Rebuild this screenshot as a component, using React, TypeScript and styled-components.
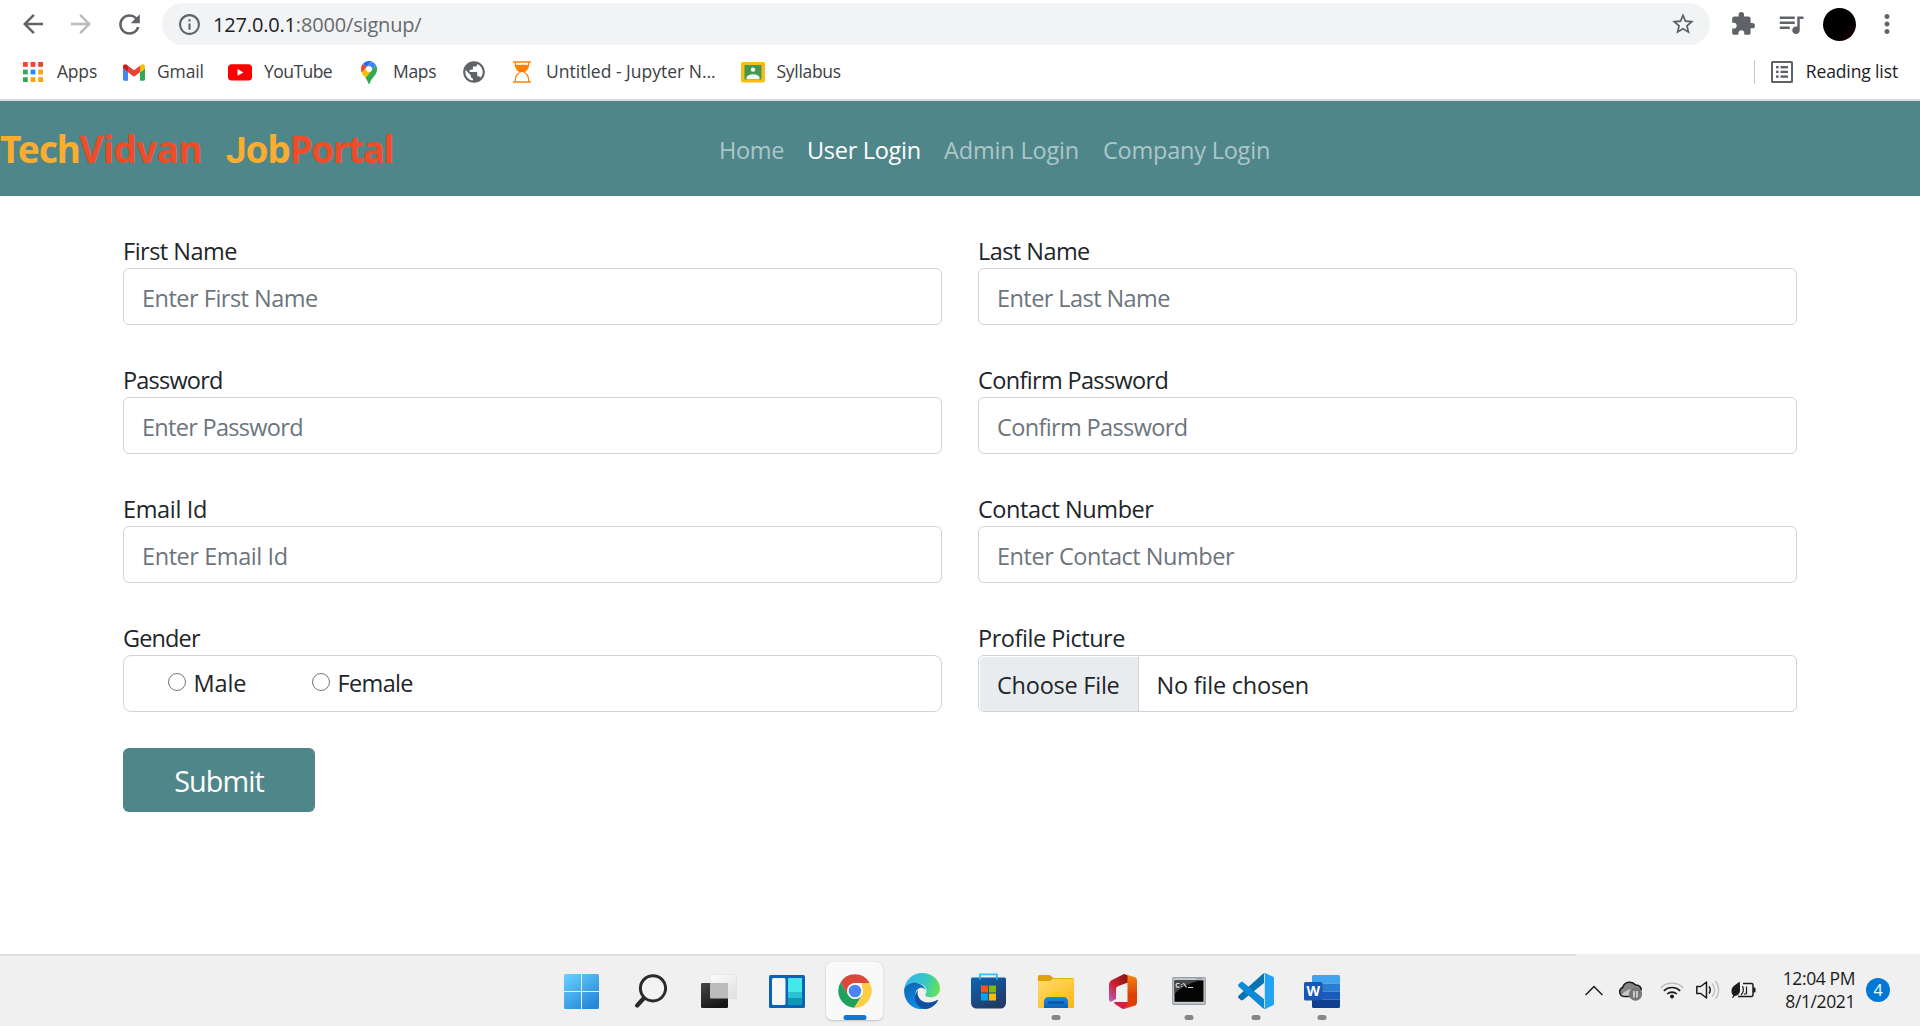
import React from "react";
import styled, { createGlobalStyle } from "styled-components";
import {
  MdArrowBack,
  MdArrowForward,
  MdExtension,
  MdInfoOutline,
  MdMoreVert,
  MdPublic,
  MdQueueMusic,
  MdRefresh,
  MdStarBorder,
} from "react-icons/md";

const TEAL = "#4f868a";
const GREY = "#5f6368";

const GlobalStyle = createGlobalStyle`
  * { box-sizing: border-box; }
  body {
    margin: 0;
    background: #fff;
    font-family: "Segoe UI", "Open Sans", "Noto Sans", sans-serif;
    color: #212529;
  }
  svg { display: block; flex: none; }
`;

const Screen = styled.div`
  display: flex;
  flex-direction: column;
  width: 1920px;
  height: 1026px;
  overflow: hidden;
`;

/* ---------- browser chrome ---------- */

const Toolbar = styled.div`
  display: flex;
  align-items: center;
  height: 48px;
  padding-left: 18px;
  color: ${GREY};
`;

const ToolButton = styled.button<{ $faded?: boolean; $width?: number }>`
  display: flex;
  flex: none;
  align-items: center;
  justify-content: center;
  width: ${(p) => p.$width ?? 48}px;
  height: 42px;
  padding: 0;
  border: 0;
  background: none;
  color: ${(p) => (p.$faded ? "#babcbe" : GREY)};
`;

const Omnibox = styled.div`
  display: flex;
  flex: none;
  align-items: center;
  width: 1548px;
  height: 42px;
  margin-left: 18px;
  padding: 0 14px 0 15px;
  border-radius: 21px;
  background: #f1f3f4;
`;

const Url = styled.span`
  flex: 1;
  margin-left: 11px;
  font-size: 20px;
  letter-spacing: -0.17px;
  color: #68696c;
  b { font-weight: 400; color: #202124; }
`;

const Avatar = styled.div`
  flex: none;
  width: 33px;
  height: 33px;
  margin-left: 17px;
  border-radius: 50%;
  background: linear-gradient(135deg, #000 60%, #1c0003);
`;

const Bookmarks = styled.div`
  display: flex;
  align-items: center;
  height: 51px;
  padding: 0 22px 3px 23px;
  font-size: 17.5px;
  color: #3c4043;
`;

const Bookmark = styled.div<{ $width: number; $icon: number; $track?: number }>`
  display: flex;
  align-items: center;
  flex: none;
  width: ${(p) => p.$width}px;
  letter-spacing: ${(p) => p.$track ?? 0}px;
  line-height: 22px;
  white-space: nowrap;
  svg { margin-right: ${(p) => p.$icon}px; }
`;

const BookmarkName = styled.span`
  padding-bottom: 2px;
`;

const ReadingList = styled.div`
  display: flex;
  align-items: center;
  gap: 12.5px;
  height: 24px;
  margin-left: auto;
  padding-left: 16px;
  border-left: 1px solid #c6c8cb;
  line-height: 22px;
  letter-spacing: -0.12px;
  color: #202124;
`;

/* ---------- page ---------- */

const Navbar = styled.nav`
  display: flex;
  align-items: center;
  height: 97px;
  border-top: 2px solid #dadce0;
  background: ${TEAL};
`;

const Brand = styled.div`
  display: flex;
  gap: 24px;
  width: 719px;
  padding-top: 3px;
  font-family: "Noto Sans", sans-serif;
  font-size: 37px;
  font-weight: 700;
  line-height: 50px;
`;

const BrandPart = styled.span<{ $warm?: boolean; $flatJ?: boolean; $track: number }>`
  display: inline-block;
  color: ${(p) => (p.$warm ? "#f04c27" : "#fbad30")};
  letter-spacing: ${(p) => p.$track}px;
  &::first-letter {
    ${(p) => p.$flatJ && "font-family: Roboto, sans-serif;"}
  }
`;

const NavLinks = styled.div`
  display: grid;
  grid-template-columns: 88px 137px 159px auto;
  padding-top: 2px;
`;

const NavLink = styled.a<{ $active?: boolean; $track: number }>`
  font-size: 23.5px;
  line-height: 36px;
  white-space: nowrap;
  color: ${(p) => (p.$active ? "#fff" : "rgba(255,255,255,.55)")};
  letter-spacing: ${(p) => p.$track}px;
`;

const Main = styled.main`
  flex: 1;
  padding: 36px 123px 0;
`;

const Form = styled.form`
  display: grid;
  grid-template-columns: 819px 819px;
  gap: 36px;
`;

const Field = styled.div`
  display: flex;
  flex-direction: column;
`;

const Label = styled.label<{ $track: number }>`
  height: 36px;
  padding-top: 1px;
  font-size: 23.5px;
  line-height: 36px;
  letter-spacing: ${(p) => p.$track}px;
`;

const Input = styled.input<{ $track: number }>`
  width: 100%;
  height: 57px;
  padding: 2px 19px 0 18px;
  border: 1px solid #ced4da;
  border-radius: 6px;
  font: inherit;
  font-size: 23.5px;
  letter-spacing: ${(p) => p.$track}px;
  &::placeholder { color: #6c757d; opacity: 1; }
`;

const RadioBox = styled.div`
  display: flex;
  height: 57px;
  padding: 0 0 2px 44px;
  border: 1px solid #d3d3d3;
  border-radius: 8px;
`;

const Option = styled.label<{ $track: number }>`
  display: flex;
  align-items: center;
  width: 144px;
  font-size: 23.5px;
  letter-spacing: ${(p) => p.$track}px;
`;

const Radio = styled.input`
  appearance: none;
  flex: none;
  width: 18px;
  height: 18px;
  margin: 0 7.5px 2px 0;
  border: 1.5px solid #767676;
  border-radius: 50%;
`;

const FileBox = styled.div`
  display: flex;
  height: 57px;
  padding: 1px 0 0 1px;
  border: 1px solid #ced4da;
  border-radius: 6px;
  font-size: 23.5px;
  line-height: 56px;
`;

const FileButton = styled.span`
  width: 159px;
  height: 54px;
  padding-left: 17px;
  border-right: 1px solid #ced4da;
  border-radius: 5px 0 0 5px;
  background: #e9ecef;
  letter-spacing: -0.24px;
  white-space: nowrap;
`;

const FileName = styled.span`
  height: 54px;
  padding-left: 17.5px;
  letter-spacing: -0.22px;
`;

const Submit = styled.button`
  width: 192px;
  height: 64px;
  padding: 0;
  border: 0;
  border-radius: 6px;
  background: ${TEAL};
  color: #fff;
  font: inherit;
  font-size: 28.8px;
  letter-spacing: -0.92px;
`;

/* ---------- taskbar ---------- */

const Taskbar = styled.div`
  display: flex;
  height: 72px;
  background: #f0f0f0;
`;

const Apps = styled.div`
  display: grid;
  grid-template-columns: 69px 70px 66px 70px 65px 70px 63px 72px 61px 71px 64px 68px;
  width: 1576px;
  padding-left: 547px;
  border-top: 2px solid #dfdfdf;
`;

const TaskbarApp = styled.div<{ $state?: "active" | "open" }>`
  position: relative;
  display: flex;
  align-items: center;
  justify-content: center;
  justify-self: center;
  width: 57px;
  height: 58px;
  margin-top: 6px;
  border-radius: 6px;
  ${(p) => p.$state === "active" && "background:#f9f9f9; box-shadow: 0 1px 2px #c4c4c4, 0 0 1px #c8c8c8;"}
  &::after {
    content: ${(p) => (p.$state ? '""' : "none")};
    position: absolute;
    left: 50%;
    bottom: 0;
    width: ${(p) => (p.$state === "active" ? 23 : 9)}px;
    height: 5px;
    transform: translateX(-50%);
    border-radius: 3px;
    background: ${(p) => (p.$state === "active" ? "#0a78d4" : "#868686")};
  }
`;

const Tray = styled.div`
  display: flex;
  align-items: center;
  height: 72px;
  padding-left: 9px;
`;

const TrayIcon = styled.span<{ $gap: number }>`
  margin-right: ${(p) => p.$gap}px;
`;

const Clock = styled.div`
  width: 99px;
  font-size: 17.5px;
  line-height: 23px;
  letter-spacing: -0.4px;
  text-align: right;
  color: #1b1b1b;
`;

const Badge = styled.div`
  width: 24px;
  height: 24px;
  margin-left: 11px;
  border-radius: 50%;
  background: #0078d7;
  color: #fff;
  font-size: 16px;
  line-height: 24px;
  text-align: center;
`;

/* ---------- drawings ---------- */

const AppsGridIcon = () => {
  const colors = ["#fb4134", "#fb4134", "#ea4335", "#34a853", "#1a8cff", "#fba50a", "#34a853", "#fba50a", "#fba50a"];
  return (
    <svg width="20" height="20">
      {colors.map((c, i) => (
        <rect key={i} x={(i % 3) * 7.6} y={Math.floor(i / 3) * 7.6} width="4.8" height="4.8" fill={c} />
      ))}
    </svg>
  );
};

const GmailIcon = () => (
  <svg width="22" height="17" viewBox="0 0 88 66">
    <path fill="#4285f4" d="M6 66h14V32L0 17v43c0 3.3 2.7 6 6 6" />
    <path fill="#34a853" d="M68 66h14c3.300 0 6-2.700 6-6V17L68 32" />
    <path fill="#fbbc04" d="M68 6v26l20-15V9c0-7.400-8.500-11.600-14.400-7.200" />
    <path fill="#ea4335" d="M20 32V6l24 18L68 6v26L44 50" />
    <path fill="#c5221f" d="M0 9v8l20 15V6l-5.600-4.200C8.500-2.600 0 1.600 0 9" />
  </svg>
);

const YouTubeIcon = () => (
  <svg width="24" height="17">
    <rect y=".3" width="24" height="16.200" rx="3.500" fill="#f00" />
    <path d="M9.500 5l6 3.400-6 3.400z" fill="#fff" />
  </svg>
);

const MapsIcon = () => (
  <svg width="16" height="23" viewBox="0 0 92.300 132.300">
    <path fill="#1a73e8" d="M60.200 2.200C55.800.8 51 0 46.100 0 32 0 19.300 6.400 10.800 16.500l21.800 18.300z" />
    <path fill="#ea4335" d="M10.800 16.500C4.100 24.500 0 34.900 0 46.100c0 8.700 1.700 15.700 4.600 22l28-33.300z" />
    <path fill="#4285f4" d="M46.200 28.500a17.700 17.700 0 0113.500 29.200s13.100-15.600 27.500-32.700c-5.900-11.300-15.600-20.300-27-22.800L32.600 34.800c3.300-3.800 8.100-6.300 13.600-6.300" />
    <path fill="#fbbc04" d="M46.200 63.800a17.700 17.700 0 01-13.500-29.100l-28 33.300c4.800 10.600 12.800 19.200 21 29.900l34.100-40.500c-3.300 3.900-8.100 6.400-13.600 6.400" />
    <path fill="#34a853" d="M59.100 109.200c15.400-24.100 33.300-35 33.300-63 0-7.700-1.900-14.900-5.200-21.200L25.600 98c2.600 3.400 5.300 7.300 7.900 11.300 9.400 14.500 6.800 23.100 12.800 23.100s3.400-8.700 12.800-23.200" />
  </svg>
);

const HourglassIcon = () => (
  <svg width="18" height="22" viewBox="0 0 18 22" fill="none" stroke="#ff8000" strokeWidth="1.500">
    <path d="M0 1h18M0 21h18" />
    <path d="M2.200 1c0 5.500 1.200 7.500 5 10-3.800 2.500-5 4.500-5 10M15.800 1c0 5.500-1.200 7.500-5 10 3.800 2.500 5 4.500 5 10" strokeWidth="1.200" />
    <path d="M2.500 4c1.500-.6 3 .4 6.500-.2 3-.4 4.500.4 6.500 0-.6 3.700-2 5.700-4.500 7.200H7C4.500 9.500 3 7.500 2.500 4z" fill="#ff8000" stroke="none" />
  </svg>
);

const ClassroomIcon = () => (
  <svg width="24" height="21">
    <rect width="24" height="20.500" rx="1.800" fill="#fbbc14" />
    <rect x="3.500" y="3" width="17" height="14.500" fill="#43974f" />
    <circle cx="12" cy="7.600" r="2.200" fill="#fff" />
    <path d="M5.500 17.200v-1.400c0-2.300 3.500-3.500 6.500-3.500s6.500 1.200 6.500 3.500v1.400z" fill="#f4f7f4" />
  </svg>
);

const ReadingListIcon = () => (
  <svg width="22" height="22" fill={GREY}>
    <path fillRule="evenodd" d="M1.500 0h19A1.500 1.500 0 0122 1.500v19a1.500 1.500 0 01-1.500 1.500h-19A1.500 1.500 0 010 20.500v-19A1.500 1.500 0 011.500 0zM2 2v18h18V2z" />
    {[5, 9.7, 14.4].map((y) => (
      <React.Fragment key={y}>
        <rect x="5" y={y} width="2.600" height="2.400" />
        <rect x="9.500" y={y} width="7.500" height="2.400" />
      </React.Fragment>
    ))}
  </svg>
);

const StartIcon = () => (
  <svg width="35" height="35">
    <defs>
      <linearGradient id="win" gradientUnits="userSpaceOnUse" x1="0" y1="0" x2="26" y2="35">
        <stop stopColor="#6ad2ff" />
        <stop offset="1" stopColor="#2487d8" />
      </linearGradient>
    </defs>
    <path fill="url(#win)" d="M1.500 0H17v17H0V1.500A1.500 1.500 0 011.500 0zM18 0h15.500A1.500 1.500 0 0135 1.500V17H18zM0 18h17v17H1.500A1.500 1.500 0 010 33.500zM18 18h17v15.500a1.500 1.500 0 01-1.500 1.500H18z" />
  </svg>
);

const SearchIcon = () => (
  <svg width="32" height="34" fill="none" stroke="#2a2a2a">
    <path d="M8.500 24.500L2.200 31.500" strokeWidth="4.200" strokeLinecap="round" />
    <circle cx="18" cy="14.300" r="12.600" strokeWidth="3" fill="#f3f3f3" />
  </svg>
);

const TaskViewIcon = () => (
  <svg width="36" height="34">
    <defs>
      <linearGradient id="tvb" x2=".5" y2="1"><stop stopColor="#474747" /><stop offset="1" stopColor="#171717" /></linearGradient>
      <linearGradient id="tvf" x2=".7" y2="1"><stop stopColor="#fdfdfd" /><stop offset="1" stopColor="#e2e2e2" /></linearGradient>
    </defs>
    <rect x="9.200" y=".4" width="26.300" height="24.300" rx="1" fill="url(#tvf)" stroke="#dcdcdc" strokeWidth=".6" />
    <rect y="9" width="27" height="25" rx="1.200" fill="url(#tvb)" />
    <path d="M9 9h18v15.500H10a1 1 0 01-1-1z" fill="#bcbcbc" />
  </svg>
);

const WidgetsIcon = () => (
  <svg width="36" height="33">
    <rect width="36" height="33" rx="1.500" fill="#0a64b4" />
    <rect x="3" y="3" width="13.500" height="27" rx="1.500" fill="#f6f6f6" />
    <path d="M19 3h14v14H19z" fill="#44e8e8" />
    <path d="M19 17h14v6.500H19z" fill="#27c3d2" />
    <path d="M19 23.500h14V30H19z" fill="#0f97b5" />
  </svg>
);

const ChromeIcon = () => (
  <svg width="34" height="34" viewBox="-17 -17 34 34">
    <path d="M-14.500 -8.400A16.700 16.700 0 0114.600 -8H0L-7 4z" fill="#d9483b" />
    <path d="M14.600 -8A16.700 16.700 0 01-.8 16.700L7 4V-8z" fill="#fdce45" />
    <path d="M-14.500 -8.400A16.700 16.700 0 00-.8 16.700L6.800 4.200L-6.900 4z" fill="#1fa15e" />
    <circle r="8" fill="#fff" />
    <circle r="6.300" fill="#4a86f3" />
  </svg>
);

const EdgeIcon = () => (
  <svg width="36" height="36" viewBox="0 0 36 36">
    <defs>
      <linearGradient id="eg" x1="0" y1=".4" x2="1" y2=".6"><stop stopColor="#35b5f0" /><stop offset=".55" stopColor="#35c8c4" /><stop offset="1" stopColor="#68e24e" /></linearGradient>
      <linearGradient id="eb" x2=".4" y2="1"><stop stopColor="#1264b0" /><stop offset="1" stopColor="#078ce4" /></linearGradient>
    </defs>
    <path d="M.3 16C1.500 6.500 9 0 18 0c10.500 0 18 7.600 18 15.500 0 5.500-4.500 8.800-9.500 8.800-4 0-6-1.500-5-3 2.300-3.300 1-9.800-7.500-11C8 9.700 2.500 12 .3 16z" fill="url(#eg)" />
    <path d="M.2 16C2 12 7 9 13 10c4.500.8 7.600 3.500 8.500 6.800-3.500-4.200-9.500-2-10 4.200-.5 7.500 6 13.500 11.500 14.300C10 39 -1 29 .2 16z" fill="url(#eb)" />
    <path d="M14 17c-2 6 2.500 12.500 10.500 12.500 3.500 0 6-.9 8.500-2.400.7-.3 1.200.2.800.8C31 32.500 26.500 36 20.500 36 12 34 7.500 24.500 14 17z" fill="#1150a0" />
  </svg>
);

const StoreIcon = () => (
  <svg width="35" height="36">
    <defs><linearGradient id="st" x2=".6" y2="1"><stop stopColor="#0a66b8" /><stop offset="1" stopColor="#223a66" /></linearGradient></defs>
    <path d="M9 6V1.300h17V6" fill="none" stroke="#24c6f7" strokeWidth="1.800" />
    <path d="M1.500 4.500h32A1.500 1.500 0 0135 6v24a5.500 5.500 0 01-5.500 5.500h-24A5.500 5.500 0 010 30V6a1.500 1.500 0 011.500-1.500z" fill="url(#st)" />
    <path d="M9 4.500v2.200M26 4.500v2.200" fill="none" stroke="#24c6f7" strokeWidth="1.500" />
    <path d="M10 12.500h7v7h-7z" fill="#f65321" /><path d="M18 12.500h7v7h-7z" fill="#80bb06" />
    <path d="M10 20.500h7v7h-7z" fill="#04a5f0" /><path d="M18 20.500h7v7h-7z" fill="#ffba08" />
  </svg>
);

const ExplorerIcon = () => (
  <svg width="36" height="33">
    <defs>
      <linearGradient id="fo" x2=".8" y2="1"><stop stopColor="#ffdc69" /><stop offset="1" stopColor="#fbb91d" /></linearGradient>
      <linearGradient id="fb" x2="0" y2="1"><stop stopColor="#1a8ade" /><stop offset="1" stopColor="#0a62b8" /></linearGradient>
    </defs>
    <path d="M1.500 0H11c2 0 3 3 5 3h18.500A1.500 1.500 0 0136 4.500V9H0V1.500A1.500 1.500 0 011.500 0z" fill="#e0a008" />
    <path d="M0 6h11c2.500 0 2.500-2.300 5-2.300h20V31.500a1.500 1.500 0 01-1.500 1.500h-33A1.500 1.500 0 010 31.500z" fill="url(#fo)" />
    <path d="M6 33v-6.500a4.500 4.500 0 014.500-4.500h15a4.500 4.500 0 014.500 4.500V33z" fill="url(#fb)" />
    <path d="M11 27.500h14" stroke="#0a4d94" strokeWidth="1.800" strokeLinecap="round" />
  </svg>
);

const OfficeIcon = () => (
  <svg width="28" height="35">
    <defs>
      <linearGradient id="o1" x1=".8" y1="0" x2="0" y2="1"><stop stopColor="#8f1410" /><stop offset=".5" stopColor="#cf2030" /><stop offset="1" stopColor="#b765c8" /></linearGradient>
      <linearGradient id="o2" x2="0" y2="1"><stop stopColor="#f48a10" /><stop offset=".6" stopColor="#dc3f08" /></linearGradient>
    </defs>
    <path d="M15 0l4 1.500V8.500L9.500 12c-1.700.7-2.500 1.700-2.500 3.200V25l-4.500 2.500C1 28 0 27 0 25.500V11c0-2.500 1.300-4 3-5z" fill="url(#o1)" />
    <path d="M6 28h13v4l-4 3c-1 0-2-.3-3-1l-6-4c-1.200-.8-1-2 0-2z" fill="#d91c41" />
    <path d="M15 0l10.500 3A3.500 3.500 0 0128 6.500v22a3.500 3.500 0 01-2.500 3.300L15 35l3.500-3V1.500z" fill="url(#o2)" />
  </svg>
);

const TerminalIcon = () => (
  <svg width="34" height="28">
    <rect x=".7" y=".7" width="32.600" height="26.600" rx="1" fill="#c9ced6" stroke="#989da5" strokeWidth="1.200" />
    <path d="M2.500 3.300h29v21.500h-29z" fill="#050505" />
    <path d="M2.500 3.300h27C17 6 9 10 2.500 17z" fill="#464646" />
    <path d="M7.500 6.500H5.200a1 1 0 00-1 1v1.600a1 1 0 001 1h2.300M9.700 7v1M9.700 9v1M11.300 6l3.200 4.300M16 10.500h5" stroke="#ddd" strokeWidth="1.200" fill="none" />
    <path d="M24 1.900h6" stroke="#5b7ea8" strokeWidth="1" strokeDasharray="1.500 .8" />
  </svg>
);

const VsCodeIcon = () => (
  <svg width="36" height="36">
    <path d="M26 .5V10L5 27c-1 .6-2 .3-2.500-.2L.5 25c-.7-.8-.6-1.800.2-2.500L25 .8z" fill="#0873b4" />
    <path d="M26 35.500V26L5 9.200c-1-.6-2-.3-2.500.2L.5 11.200c-.7.8-.6 1.800.2 2.500L25 35.200z" fill="#0e8ad4" />
    <path d="M26 .3c.6-.3 1-.3 1.600 0l7.200 3.200c.8.400 1.200 1 1.200 1.800v25.400c0 .8-.4 1.400-1.200 1.800l-7.200 3.200c-1 .4-1.800.2-2.600-.4 1 .3 1.800-.2 1.800-1.300V2c0-1.100-.8-1.800-1.800-1.200z" fill="#22a4f2" />
  </svg>
);

const WordLetter = styled.text`
  font: 700 14px "Open Sans", sans-serif;
  fill: #fff;
`;

const WordIcon = () => (
  <svg width="36" height="33">
    <path d="M9.500 0h25A1.500 1.500 0 0136 1.500V8.500H8v-7A1.500 1.500 0 019.500 0z" fill="#41a5ee" />
    <path d="M8 8.500h28v8H8z" fill="#2b7cd3" />
    <path d="M8 16.500h28v8H8z" fill="#185abd" />
    <path d="M8 24.500h28v7a1.500 1.500 0 01-1.500 1.500h-25A1.500 1.500 0 018 31.500z" fill="#103f91" />
    <rect y="7" width="18.500" height="18.500" rx="1.500" fill="#1857b8" />
    <WordLetter x="9.300" y="21.200" textAnchor="middle">W</WordLetter>
  </svg>
);

const ChevronUp = () => (
  <svg width="18" height="11" fill="none" stroke="#1b1b1b" strokeWidth="1.500"><path d="M.6 10L9 1.500 17.400 10" /></svg>
);

const CloudIcon = () => (
  <svg width="24" height="21">
    <path d="M5.500 16.500a4.700 4.700 0 01-.8-9A7.300 7.300 0 0117.500 5a5 5 0 015.500 6c0 4-1 5.500-4 5.500z" fill="#858585" />
    <path d="M3 15.500c3-4 8-7 14-6.500 3 0 5 1.500 5.500 3l-1 4.500H5.500z" fill="#c9c9c9" />
    <path d="M5.500 16.500a4.700 4.700 0 01-.8-9A7.300 7.300 0 0117.500 5a5 5 0 015.700 5.500M5.500 16.500H12" fill="none" stroke="#1b1b1b" strokeWidth="1.500" />
    <circle cx="17.500" cy="14.200" r="6.500" fill="#777" />
    <path d="M16 11v6.500M19 11v6.500" stroke="#fff" strokeWidth="1.200" />
  </svg>
);

const WifiIcon = () => (
  <svg width="24" height="18" fill="none" strokeWidth="1.600">
    <path d="M.6 6.800a16.500 16.500 0 0122.800 0" stroke="#bdbdbd" />
    <path d="M3.800 9.800a12 12 0 0116.400 0M7.200 13a7 7 0 019.600 0" stroke="#1b1b1b" />
    <circle cx="12" cy="15.500" r="2" fill="#1b1b1b" />
  </svg>
);

const SpeakerIcon = () => (
  <svg width="24" height="20" fill="none" strokeWidth="1.500">
    <path d="M.8 6.500h4L10.500 2v16L4.800 13.500h-4z" stroke="#1b1b1b" strokeLinejoin="round" />
    <path d="M13 6.500a6 6 0 010 7" stroke="#1b1b1b" />
    <path d="M16.200 3.500a10 10 0 010 13M19.400 1a14 14 0 010 18" stroke="#c4c4c4" />
  </svg>
);

const BatteryIcon = () => (
  <svg width="25" height="18" fill="none" stroke="#1b1b1b" strokeWidth="1.500">
    <path d="M12 2.500h8.500a1.500 1.500 0 011.500 1.500v10a1.500 1.500 0 01-1.500 1.500H7" />
    <rect x="22.200" y="6.500" width="2.300" height="5" rx="1" fill="#1b1b1b" stroke="none" />
    <path d="M8.500.5c-2 2.500-8 4-8 9.500 0 2.500.8 3.500 1.800 4.500L.8 17l1.400-.2 1.300-1.900C7.500 15 9.500 12 9 7.500 9 4.500 9 2 8.500.5z" fill="#1b1b1b" stroke="none" />
    <path d="M11.500 5c1.500 3 .8 6.500-1.500 9M15.500 5.500v7l-2.500.8" strokeWidth="1.200" />
  </svg>
);

/* ---------- data ---------- */

const fields = [
  { label: "First Name", lt: -0.5, hint: "Enter First Name", ht: -0.5 },
  { label: "Last Name", lt: -0.55, hint: "Enter Last Name", ht: -0.57 },
  { label: "Password", lt: -0.8, hint: "Enter Password", ht: -0.7 },
  { label: "Confirm Password", lt: -0.65, hint: "Confirm Password", ht: -0.63 },
  { label: "Email Id", lt: -0.35, hint: "Enter Email Id", ht: -0.42 },
  { label: "Contact Number", lt: -0.43, hint: "Enter Contact Number", ht: -0.46 },
];

const taskbarApps: { icon: React.FC; state?: "active" | "open" }[] = [
  { icon: StartIcon },
  { icon: SearchIcon },
  { icon: TaskViewIcon },
  { icon: WidgetsIcon },
  { icon: ChromeIcon, state: "active" },
  { icon: EdgeIcon },
  { icon: StoreIcon },
  { icon: ExplorerIcon, state: "open" },
  { icon: OfficeIcon },
  { icon: TerminalIcon, state: "open" },
  { icon: VsCodeIcon, state: "open" },
  { icon: WordIcon, state: "open" },
];

export default function App() {
  return (
    <Screen>
      <GlobalStyle />
      <Toolbar>
        <ToolButton $width={30}><MdArrowBack size={30} /></ToolButton>
        <ToolButton $faded $width={66}><MdArrowForward size={30} /></ToolButton>
        <ToolButton $width={30}><MdRefresh size={31} /></ToolButton>
        <Omnibox>
          <MdInfoOutline size={25} />
          <Url><b>127.0.0.1</b>:8000/signup/</Url>
          <MdStarBorder size={26} />
        </Omnibox>
        <ToolButton $width={66}><MdExtension size={26} /></ToolButton>
        <ToolButton $width={30}><MdQueueMusic size={30} /></ToolButton>
        <Avatar />
        <ToolButton $width={62}><MdMoreVert size={30} /></ToolButton>
      </Toolbar>
      <Bookmarks>
        <Bookmark $width={100} $icon={14} $track={-0.2}><AppsGridIcon /><BookmarkName>Apps</BookmarkName></Bookmark>
        <Bookmark $width={105} $icon={12} $track={-0.13}><GmailIcon /><BookmarkName>Gmail</BookmarkName></Bookmark>
        <Bookmark $width={133} $icon={12} $track={-0.55}><YouTubeIcon /><BookmarkName>YouTube</BookmarkName></Bookmark>
        <Bookmark $width={100} $icon={16} $track={-0.3}><MapsIcon /><BookmarkName>Maps</BookmarkName></Bookmark>
        <Bookmark $width={52} $icon={0}><MdPublic size={26} color={GREY} /></Bookmark>
        <Bookmark $width={228} $icon={15}><HourglassIcon /><BookmarkName>Untitled - Jupyter N...</BookmarkName></Bookmark>
        <Bookmark $width={110} $icon={11.5} $track={-0.3}><ClassroomIcon /><BookmarkName>Syllabus</BookmarkName></Bookmark>
        <ReadingList><ReadingListIcon /><BookmarkName>Reading list</BookmarkName></ReadingList>
      </Bookmarks>
      <Navbar>
        <Brand>
          <span>
            <BrandPart $track={-1.1}>Tech</BrandPart>
            <BrandPart $warm $track={-0.6}>Vidvan</BrandPart>
          </span>
          <span>
            <BrandPart $flatJ $track={-1.1}>Job</BrandPart>
            <BrandPart $warm $track={-1.4}>Portal</BrandPart>
          </span>
        </Brand>
        <NavLinks>
          <NavLink $track={-0.33}>Home</NavLink>
          <NavLink $active $track={-0.3}>User Login</NavLink>
          <NavLink $track={-0.17}>Admin Login</NavLink>
          <NavLink $track={-0.22}>Company Login</NavLink>
        </NavLinks>
      </Navbar>
      <Main>
        <Form>
          {fields.map((f) => (
            <Field key={f.label}>
              <Label $track={f.lt}>{f.label}</Label>
              <Input $track={f.ht} placeholder={f.hint} />
            </Field>
          ))}
          <Field>
            <Label $track={-0.87}>Gender</Label>
            <RadioBox>
              <Option $track={-0.1}><Radio type="radio" name="gender" />Male</Option>
              <Option $track={-0.64}><Radio type="radio" name="gender" />Female</Option>
            </RadioBox>
          </Field>
          <Field>
            <Label $track={-0.46}>Profile Picture</Label>
            <FileBox>
              <FileButton>Choose File</FileButton>
              <FileName>No file chosen</FileName>
            </FileBox>
          </Field>
          <Submit type="button">Submit</Submit>
        </Form>
      </Main>
      <Taskbar>
        <Apps>
          {taskbarApps.map(({ icon: Icon, state }, i) => (
            <TaskbarApp key={i} $state={state}><Icon /></TaskbarApp>
          ))}
        </Apps>
        <Tray>
          <TrayIcon $gap={15}><ChevronUp /></TrayIcon>
          <TrayIcon $gap={18}><CloudIcon /></TrayIcon>
          <TrayIcon $gap={12}><WifiIcon /></TrayIcon>
          <TrayIcon $gap={11}><SpeakerIcon /></TrayIcon>
          <TrayIcon $gap={0}><BatteryIcon /></TrayIcon>
          <Clock>12:04 PM<br />8/1/2021</Clock>
          <Badge>4</Badge>
        </Tray>
      </Taskbar>
    </Screen>
  );
}
